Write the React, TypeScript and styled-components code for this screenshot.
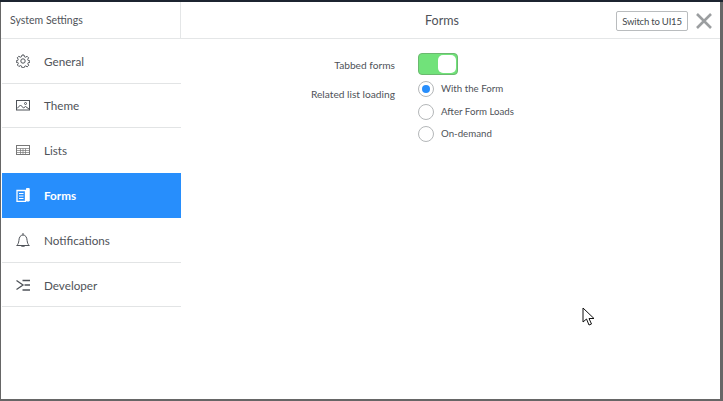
import { ReactNode } from 'react';
import styled, { createGlobalStyle } from 'styled-components';

const GlobalStyle = createGlobalStyle`
  html, body {
    margin: 0;
    height: 100%;
    background: #5a5a5a;
  }

  #root {
    height: 100%;
  }
`;

const Page = styled.div`
  box-sizing: border-box;
  width: 723px;
  height: 401px;
  padding: 2px 3px 2px 1px;
  background: linear-gradient(#1c2430 0, #1c2430 2px, #666 2px);
  font-family: Lato, 'Open Sans', sans-serif;
  overflow: hidden;
`;

const Modal = styled.div`
  position: relative;
  display: flex;
  height: 100%;
  background: #fff;
`;

const Sidebar = styled.aside`
  display: flex;
  flex-direction: column;
  flex: 0 0 180px;
`;

const SidebarHeader = styled.div`
  display: flex;
  align-items: center;
  box-sizing: border-box;
  height: 37px;
  padding-left: 9px;
  border-bottom: 1px solid #e4e6e7;
  border-right: 1px solid #e4e6e7;
  color: #4f5359;
  font-size: 10.5px;
`;

const NavList = styled.nav`
  display: flex;
  flex-direction: column;
  margin-top: -0.3px;
  padding-left: 1px;
`;

const NavItem = styled.div<{ $active?: boolean; $plain?: boolean }>`
  display: flex;
  align-items: center;
  gap: 14px;
  box-sizing: border-box;
  height: 44.8px;
  padding-left: 14px;
  border-bottom: 1px solid ${({ $active, $plain }) => ($active || $plain ? 'transparent' : '#e2e4e5')};
  background: ${({ $active }) => ($active ? '#278efc' : 'transparent')};
  color: ${({ $active }) => ($active ? '#fff' : '#4f5359')};
  font-size: 11.7px;
  font-weight: ${({ $active }) => ($active ? 700 : 400)};
`;

const NavIcon = styled.svg`
  flex: 0 0 14px;
  width: 14px;
  height: 14px;
  fill: none;
  stroke: currentColor;
  stroke-width: 1;
`;

const Main = styled.main`
  display: flex;
  flex-direction: column;
  flex: 1;
`;

const MainHeader = styled.header`
  display: flex;
  align-items: center;
  box-sizing: border-box;
  height: 37px;
  border-bottom: 1px solid #e4e6e7;
`;

const Title = styled.h1`
  flex: 1;
  margin: 0;
  padding-right: 17px;
  color: #4f5359;
  font-size: 12.5px;
  font-weight: 400;
  text-align: center;
`;

const Actions = styled.div`
  position: absolute;
  top: 9px;
  right: 8px;
  display: flex;
  align-items: center;
  gap: 8px;
`;

const SwitchButton = styled.button`
  box-sizing: border-box;
  width: 72px;
  height: 20px;
  padding: 0;
  border: 1px solid #b9bcbe;
  border-radius: 2px;
  background: #fff;
  color: #44484d;
  font-family: inherit;
  font-size: 9.5px;
  letter-spacing: -0.2px;
`;

const CloseIcon = styled.svg`
  width: 16px;
  height: 16px;
  stroke: #9b9ea0;
  stroke-width: 2.6;
`;

const Form = styled.div`
  display: grid;
  grid-template-columns: 214px auto;
  column-gap: 23px;
  row-gap: 3px;
  padding-top: 14px;
`;

const Label = styled.div<{ $top: number }>`
  padding-top: ${({ $top }) => $top}px;
  color: #4f5359;
  font-size: 10.2px;
  text-align: right;
`;

const Toggle = styled.div`
  display: flex;
  justify-content: flex-end;
  box-sizing: border-box;
  width: 40px;
  height: 22px;
  padding: 1px;
  border: 1px solid #6bb96f;
  border-radius: 4px;
  background: #71e27a;
`;

const Knob = styled.div`
  width: 18px;
  border-radius: 5px;
  background: #fff;
`;

const RadioGroup = styled.div`
  display: flex;
  flex-direction: column;
  gap: 6px;
  padding-top: 3px;
`;

const RadioRow = styled.div`
  display: flex;
  align-items: center;
  gap: 7px;
  height: 16.5px;
  color: #4f5359;
  font-size: 9.7px;
`;

const RadioText = styled.span`
  margin-bottom: 2px;
`;

const RadioMark = styled.span<{ $checked?: boolean }>`
  display: flex;
  align-items: center;
  justify-content: center;
  box-sizing: border-box;
  width: 16px;
  height: 16px;
  border: 1px solid #b4b7b9;
  border-radius: 50%;

  &::after {
    content: '';
    display: ${({ $checked }) => ($checked ? 'block' : 'none')};
    width: 8px;
    height: 8px;
    border-radius: 50%;
    background: #278efc;
  }
`;

const Cursor = styled.svg`
  position: absolute;
  top: 305px;
  left: 581px;
  width: 13px;
  height: 20px;
`;

const navItems: { label: string; icon: ReactNode; active?: boolean; plain?: boolean }[] = [
  {
    label: 'General',
    icon: (
      <>
        <circle cx="7" cy="7" r="2.2" />
        <path d="M6 1h2l.4 1.700 1.200.5 1.500-.9 1.500 1.500-.9 1.500.5 1.200L14 7v1.200l-1.700.4-.5 1.200.9 1.500-1.500 1.500-1.500-.9-1.200.5L8 13.800H6l-.4-1.700-1.200-.5-1.500.9-1.500-1.500.9-1.500-.5-1.200L0 8.200V7l1.700-.5.5-1.200-.9-1.500 1.500-1.500 1.500.9 1.200-.5z" />
      </>
    ),
  },
  {
    label: 'Theme',
    icon: (
      <>
        <rect x="0.5" y="2.5" width="13" height="9.5" />
        <path d="M1 10.500l3.500-3.500 3 3 2-1.500 3.500 2.500" />
        <circle cx="9.500" cy="5.500" r="1" />
      </>
    ),
  },
  {
    label: 'Lists',
    plain: true,
    icon: (
      <>
        <rect x="0.5" y="2.5" width="13" height="9" stroke="#777" />
        <path d="M1 5.500h12M1 7.500h12M1 9.500h12M4.500 5.500v6M7 5.500v6M9.500 5.500v6" stroke="#777" strokeWidth="0.7" />
      </>
    ),
  },
  {
    label: 'Forms',
    active: true,
    icon: (
      <>
        <path d="M1 2.500h8.500v11H1z" strokeWidth="1.300" />
        <path d="M3 5.500h4.500M3 8h4.500M3 10.500h4.500" strokeWidth="1.200" />
        <path d="M10.500 .5h2.700v12.500h-2.700z" fill="currentColor" />
      </>
    ),
  },
  {
    label: 'Notifications',
    icon: (
      <path d="M.7 12.500c1.300-1 2-2.800 2.200-5C3.100 4.200 4.500 2 7 2s3.900 2.200 4.100 5.500c.2 2.200.9 4 2.200 5zM6 1h2M5.300 13c.4 1.200 3 1.200 3.400 0" />
    ),
  },
  {
    label: 'Developer',
    icon: <path d="M.5 2.500L7 7l-6.500 4.500M6.500 2.500H14M8.500 7H14M6.500 12H14" strokeWidth="1.300" />,
  },
];

const radioOptions = ['With the Form', 'After Form Loads', 'On-demand'];

const App = () => (
  <Page>
    <GlobalStyle />
    <Modal>
      <Sidebar>
        <SidebarHeader>System Settings</SidebarHeader>
        <NavList>
          {navItems.map(({ label, icon, active, plain }) => (
            <NavItem key={label} $active={active} $plain={plain}>
              <NavIcon viewBox="0 0 14 14">{icon}</NavIcon>
              {label}
            </NavItem>
          ))}
        </NavList>
      </Sidebar>
      <Main>
        <MainHeader>
          <Title>Forms</Title>
          <Actions>
            <SwitchButton>Switch to UI15</SwitchButton>
            <CloseIcon viewBox="0 0 16 16">
              <path d="M1 1l14 14M15 1L1 15" />
            </CloseIcon>
          </Actions>
        </MainHeader>
        <Form>
          <Label $top={6}>Tabbed forms</Label>
          <Toggle>
            <Knob />
          </Toggle>
          <Label $top={10}>Related list loading</Label>
          <RadioGroup>
            {radioOptions.map((option, index) => (
              <RadioRow key={option}>
                <RadioMark $checked={index === 0} />
                <RadioText>{option}</RadioText>
              </RadioRow>
            ))}
          </RadioGroup>
        </Form>
      </Main>
      <Cursor viewBox="0 0 13 20">
        <path d="M1 1v14l3.500-3 2.500 6 2.500-1-2.500-5.500h5z" fill="#fff" stroke="#111" strokeWidth="1" />
      </Cursor>
    </Modal>
  </Page>
);

export default App;
